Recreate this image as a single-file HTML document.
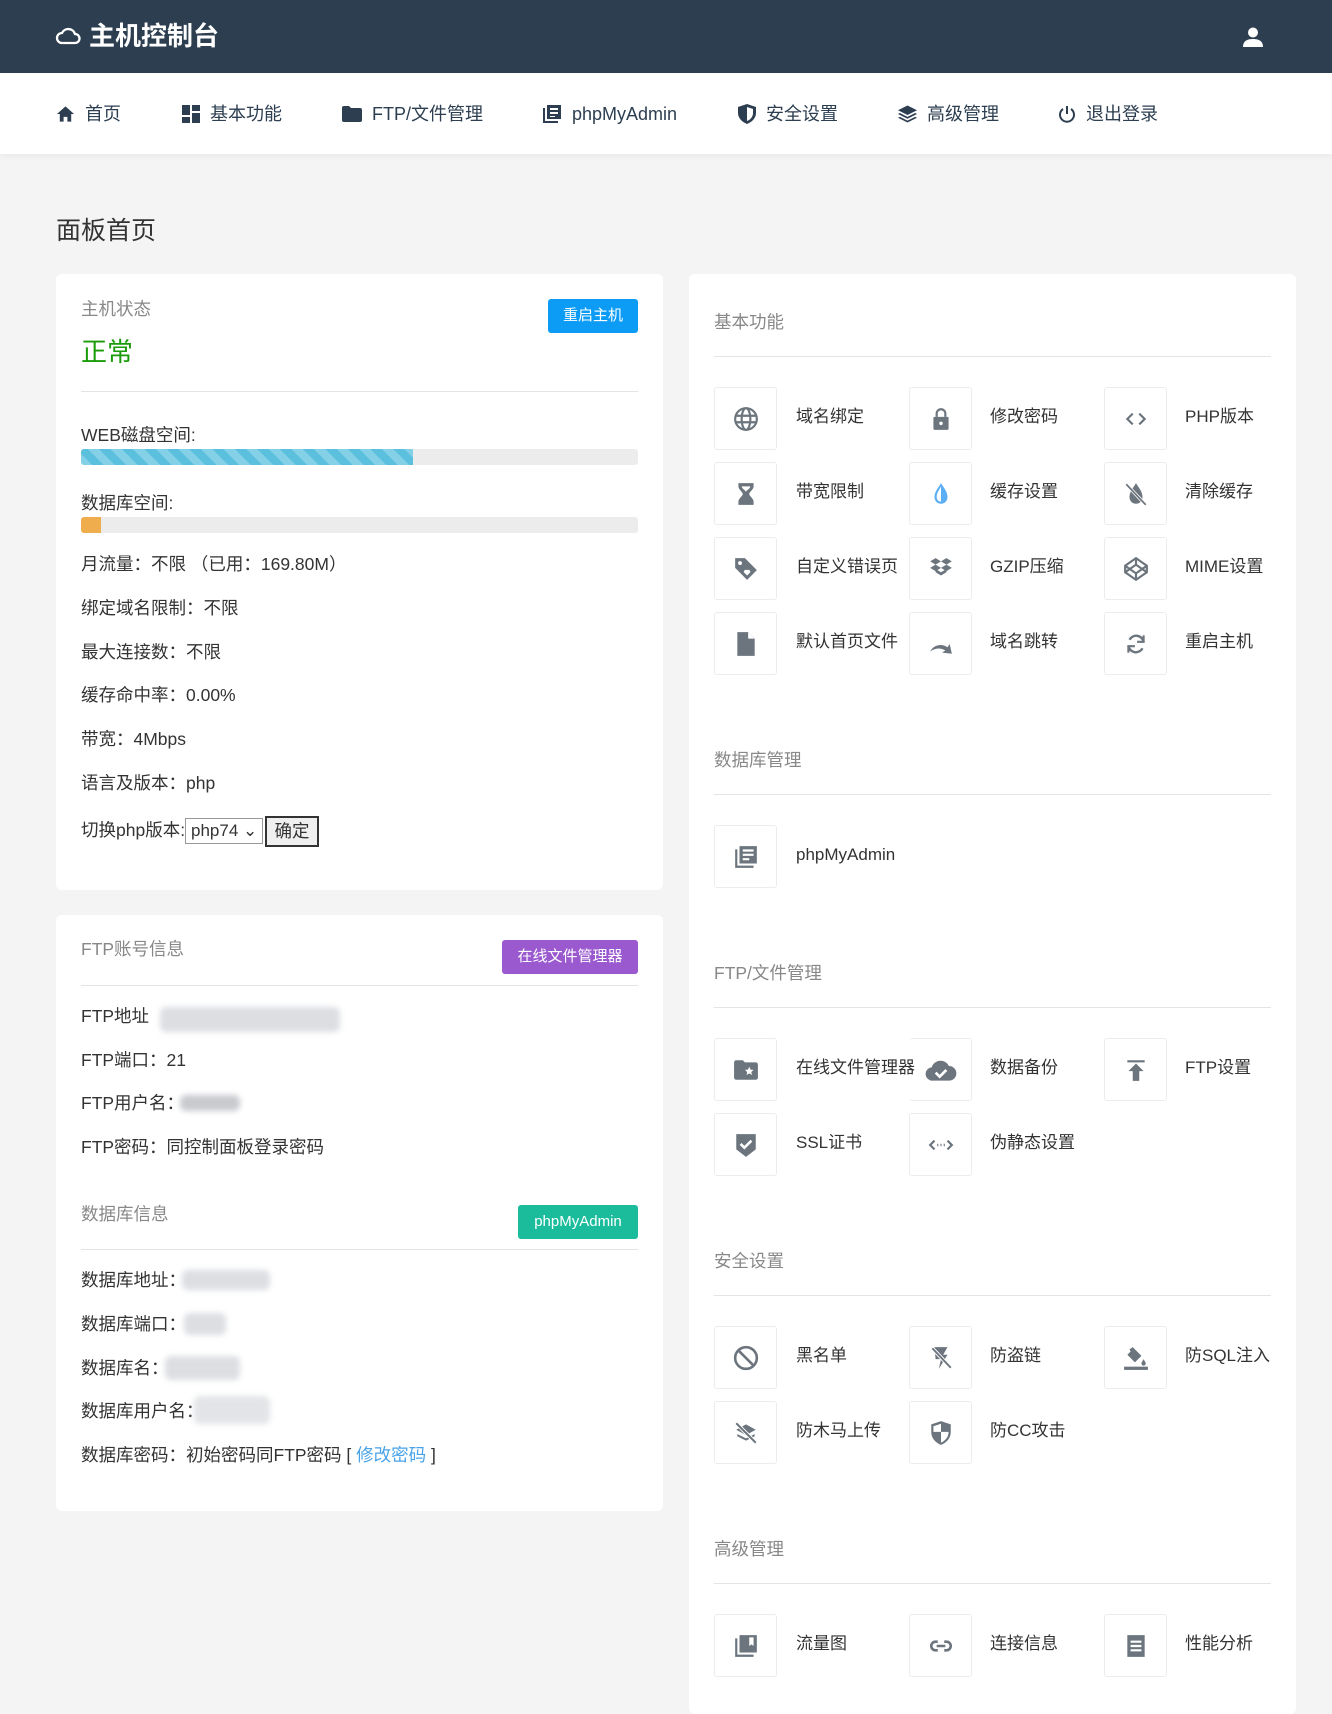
<!DOCTYPE html>
<html><head><meta charset="utf-8">
<style>
*{margin:0;padding:0;box-sizing:border-box}
body{width:1332px;height:1684px;background:#f4f4f4;font-family:"Liberation Sans","Noto Sans CJK SC",sans-serif;color:#333;position:relative;overflow:hidden}
.a{position:absolute}
.hdr{left:0;top:0;width:1332px;height:73px;background:#2c3e50}
.nav{left:0;top:73px;width:1332px;height:81px;background:#fff;box-shadow:0 2px 6px rgba(0,0,0,.05)}
.ni{top:101px;font-size:18px;color:#2c3e50;line-height:26px;display:flex;align-items:center;gap:10px}
.card{background:#fff;border-radius:6px}
.t{font-size:17.5px;line-height:24px;white-space:nowrap}
.g{color:#888}
.hr{height:1px;background:#e4e4e4}
.btn{color:#fff;font-size:15px;border-radius:3px;text-align:center;line-height:34px}
.tile{width:63px;height:63px;border:1px solid #ececec;border-radius:3px;display:flex;align-items:center;justify-content:center}
.tile svg{width:26px;height:26px}
.tile svg:not([fill]){fill:#6c757d}
.lb{font-size:17px;color:#333;white-space:nowrap;line-height:24px}
.blur{background:#dcdee2;filter:blur(3px);border-radius:6px}
</style></head><body>
<div class="a hdr"></div>
<svg class="a" style="left:55px;top:24px" width="26" height="22" viewBox="0 0 26 22"><path d="M7 19h13a4.5 4.5 0 0 0 0-9 7 7 0 0 0-13-1A5 5 0 0 0 7 19z" fill="none" stroke="#fff" stroke-width="2.3"/></svg>
<div class="a" style="left:89px;top:18px;font-size:26px;font-weight:bold;color:#fff;line-height:36px">主机控制台</div>
<svg class="a" style="left:1242px;top:26px" width="22" height="22" viewBox="0 0 22 22"><circle cx="11" cy="6.5" r="5" fill="#fff"/><path d="M1 21c0-6 4-8 10-8s10 2 10 8z" fill="#fff"/></svg>
<div class="a nav"></div>
<div class="a ni" style="left:56px"><svg width="19" height="18" viewBox="0 0 20 18"><path d="M10 1L1 9h3v8h4v-5h4v5h4V9h3z" fill="#2c3e50"/></svg>首页</div>
<div class="a ni" style="left:182px"><svg width="18" height="18" viewBox="0 0 18 18" fill="#2c3e50"><rect x="0" y="0" width="8" height="10"/><rect x="10" y="0" width="8" height="6"/><rect x="0" y="12" width="8" height="6"/><rect x="10" y="8" width="8" height="10"/></svg>基本功能</div>
<div class="a ni" style="left:342px"><svg width="20" height="16" viewBox="0 0 20 16"><path d="M0 2a2 2 0 0 1 2-2h5l2 2h9a2 2 0 0 1 2 2v10a2 2 0 0 1-2 2H2a2 2 0 0 1-2-2z" fill="#2c3e50"/></svg>FTP/文件管理</div>
<div class="a ni" style="left:542px"><svg width="20" height="20" viewBox="0 0 20 20" fill="#2c3e50"><path d="M1 4h2v13h13v2H1z"/><path d="M5 1h14v14H5zM8 4v2h8V4zm0 4v2h8V8zm0 4v1h5v-1z" fill-rule="evenodd"/></svg>phpMyAdmin</div>
<div class="a ni" style="left:738px"><svg width="18" height="20" viewBox="0 0 18 20"><path d="M9 0l9 3v6c0 5-4 9-9 11C4 18 0 14 0 9V3z" fill="#2c3e50"/><path d="M9 3l6 2v4c0 4-3 7-6 8z" fill="#fff"/></svg>安全设置</div>
<div class="a ni" style="left:898px"><svg width="19" height="18" viewBox="0 0 20 18" fill="#2c3e50"><path d="M10 0l10 5-10 5L0 5z"/><path d="M2 8l8 4 8-4 2 1-10 5L0 9z"/><path d="M2 12l8 4 8-4 2 1-10 5L0 13z"/></svg>高级管理</div>
<div class="a ni" style="left:1058px"><svg width="18" height="18" viewBox="0 0 18 18" fill="none" stroke="#2c3e50" stroke-width="2"><path d="M5 4a7 7 0 1 0 8 0"/><path d="M9 1v8"/></svg>退出登录</div>
<div class="a" style="left:56px;top:214px;font-size:25px;line-height:34px;color:#333">面板首页</div>

<!-- card 1 -->
<div class="a card" style="left:56px;top:274px;width:607px;height:616px"></div>
<div class="a t g" style="left:81px;top:297px">主机状态</div>
<div class="a btn" style="left:548px;top:299px;width:90px;background:#0c9cf5">重启主机</div>
<div class="a" style="left:81px;top:334px;font-size:26px;color:#1a9c0a;line-height:36px">正常</div>
<div class="a hr" style="left:81px;top:391px;width:557px"></div>
<div class="a t" style="left:81px;top:423px">WEB磁盘空间:</div>
<div class="a" style="left:81px;top:449px;width:557px;height:16px;background:#ececec;border-radius:3px"></div>
<div class="a" style="left:81px;top:449px;width:332px;height:16px;background:#5bc0de repeating-linear-gradient(45deg,rgba(255,255,255,.25) 0 8px,transparent 8px 16px);border-radius:3px 0 0 3px"></div>
<div class="a t" style="left:81px;top:491px">数据库空间:</div>
<div class="a" style="left:81px;top:517px;width:557px;height:16px;background:#ececec;border-radius:3px"></div>
<div class="a" style="left:81px;top:517px;width:20px;height:16px;background:#f0ad4e;border-radius:3px 0 0 3px"></div>
<div class="a t" style="left:81px;top:552px">月流量：不限 （已用：169.80M）</div>
<div class="a t" style="left:81px;top:596px">绑定域名限制：不限</div>
<div class="a t" style="left:81px;top:640px">最大连接数：不限</div>
<div class="a t" style="left:81px;top:683px">缓存命中率：0.00%</div>
<div class="a t" style="left:81px;top:727px">带宽：4Mbps</div>
<div class="a t" style="left:81px;top:771px">语言及版本：php</div>
<div class="a t" style="left:81px;top:818px">切换php版本:</div>
<div class="a t" style="left:185px;top:818px;width:78px;height:26px;border:1px solid #999;font-size:17px;line-height:24px;padding-left:5px">php74 ⌄</div>
<div class="a t" style="left:265px;top:816px;width:54px;height:31px;border:2px solid #333;background:#efefef;text-align:center;line-height:27px">确定</div>

<!-- card 2 -->
<div class="a card" style="left:56px;top:915px;width:607px;height:596px"></div>
<div class="a t g" style="left:81px;top:937px">FTP账号信息</div>
<div class="a btn" style="left:502px;top:940px;width:136px;background:#9b59d0">在线文件管理器</div>
<div class="a hr" style="left:81px;top:985px;width:557px"></div>
<div class="a t" style="left:81px;top:1004px">FTP地址</div>
<div class="a blur" style="left:160px;top:1007px;width:180px;height:25px"></div>
<div class="a t" style="left:81px;top:1048px">FTP端口：21</div>
<div class="a t" style="left:81px;top:1091px">FTP用户名：</div>
<div class="a blur" style="left:180px;top:1095px;width:60px;height:16px;background:#c8cace"></div>
<div class="a t" style="left:81px;top:1135px">FTP密码：同控制面板登录密码</div>
<div class="a t g" style="left:81px;top:1202px">数据库信息</div>
<div class="a btn" style="left:518px;top:1205px;width:120px;background:#1abc9c">phpMyAdmin</div>
<div class="a hr" style="left:81px;top:1249px;width:557px"></div>
<div class="a t" style="left:81px;top:1268px">数据库地址：</div>
<div class="a blur" style="left:182px;top:1270px;width:88px;height:20px"></div>
<div class="a t" style="left:81px;top:1312px">数据库端口：</div>
<div class="a blur" style="left:184px;top:1313px;width:42px;height:22px"></div>
<div class="a t" style="left:81px;top:1356px">数据库名：</div>
<div class="a blur" style="left:165px;top:1356px;width:75px;height:24px"></div>
<div class="a t" style="left:81px;top:1399px">数据库用户名：</div>
<div class="a blur" style="left:194px;top:1396px;width:76px;height:28px;background:#e2e4e7"></div>
<div class="a t" style="left:81px;top:1443px">数据库密码：初始密码同FTP密码 [ <span style="color:#4aa3e8">修改密码</span> ]</div>

<!-- right card -->
<div class="a card" style="left:689px;top:274px;width:607px;height:1440px"></div>
<div class="a t g" style="left:714px;top:310px">基本功能</div>
<div class="a hr" style="left:714px;top:356px;width:557px"></div>
<div class="a t g" style="left:714px;top:748px">数据库管理</div>
<div class="a hr" style="left:714px;top:794px;width:557px"></div>
<div class="a t g" style="left:714px;top:961px">FTP/文件管理</div>
<div class="a hr" style="left:714px;top:1007px;width:557px"></div>
<div class="a t g" style="left:714px;top:1249px">安全设置</div>
<div class="a hr" style="left:714px;top:1295px;width:557px"></div>
<div class="a t g" style="left:714px;top:1537px">高级管理</div>
<div class="a hr" style="left:714px;top:1583px;width:557px"></div>

<!-- tiles row1 y387 -->
<div class="a tile" style="left:714px;top:387px"><svg viewBox="0 0 24 24" fill="none" stroke="#6c757d" stroke-width="2"><circle cx="12" cy="12" r="10"/><ellipse cx="12" cy="12" rx="4" ry="10"/><path d="M2 9h20M2 15h20"/></svg></div>
<div class="a lb" style="left:796px;top:405px">域名绑定</div>
<div class="a tile" style="left:909px;top:387px"><svg viewBox="0 0 24 24"><path d="M7 10V7a5 5 0 0 1 10 0v3h-2V7a3 3 0 0 0-6 0v3z"/><rect x="5" y="10" width="14" height="12" rx="1"/><circle cx="12" cy="16" r="1.6" fill="#fff"/></svg></div>
<div class="a lb" style="left:990px;top:405px">修改密码</div>
<div class="a tile" style="left:1104px;top:387px"><svg viewBox="0 0 24 24" fill="none" stroke="#6c757d" stroke-width="2"><path d="M9 7l-5 5 5 5M15 7l5 5-5 5"/></svg></div>
<div class="a lb" style="left:1185px;top:405px">PHP版本</div>
<!-- row2 -->
<div class="a tile" style="left:714px;top:462px"><svg viewBox="0 0 24 24"><path d="M5 2h14v3c0 3-4 5-4 7s4 4 4 7v3H5v-3c0-3 4-5 4-7S5 8 5 5z"/><path d="M8 5h8c0 2-4 4-4 5-0-1-4-3-4-5z" fill="#fff"/></svg></div>
<div class="a lb" style="left:796px;top:480px">带宽限制</div>
<div class="a tile" style="left:909px;top:462px"><svg viewBox="0 0 24 24" fill="#5aaef5"><path d="M12 2C9 7 6 10 6 15a6 6 0 0 0 12 0c0-5-3-8-6-13z"/><path d="M12 5C10 9 8 11 8 15a4 4 0 0 0 4 4z" fill="#fff"/></svg></div>
<div class="a lb" style="left:990px;top:480px">缓存设置</div>
<div class="a tile" style="left:1104px;top:462px"><svg viewBox="0 0 24 24"><path d="M12 2C9 7 6 10 6 15a6 6 0 0 0 12 0c0-5-3-8-6-13z"/><path d="M3 3l18 19" stroke="#fff" stroke-width="3"/><path d="M3 3l18 19" stroke="#6c757d" stroke-width="1.6"/></svg></div>
<div class="a lb" style="left:1185px;top:480px">清除缓存</div>
<!-- row3 -->
<div class="a tile" style="left:714px;top:537px"><svg viewBox="0 0 24 24"><path d="M2 2h9l11 11-9 9L2 11z"/><circle cx="6.5" cy="6.5" r="1.8" fill="#fff"/><path d="M13 18l-3-3a2 2 0 0 1 3-2 2 2 0 0 1 3 2z" fill="#fff"/></svg></div>
<div class="a lb" style="left:796px;top:555px">自定义错误页</div>
<div class="a tile" style="left:909px;top:537px"><svg viewBox="0 0 24 24"><path d="M7 2l5 3-5 3-5-3zM17 2l5 3-5 3-5-3zM7 8l5 3-5 3-5-3zM17 8l5 3-5 3-5-3zM12 15l5-3v3l-5 3-5-3v-3z"/></svg></div>
<div class="a lb" style="left:990px;top:555px">GZIP压缩</div>
<div class="a tile" style="left:1104px;top:537px"><svg viewBox="0 0 24 24" fill="none" stroke="#6c757d" stroke-width="2"><path d="M12 2l10 7v6l-10 7-10-7V9z"/><path d="M2 9l10 7 10-7M2 15l10-7 10 7M12 2v6M12 16v6"/></svg></div>
<div class="a lb" style="left:1185px;top:555px">MIME设置</div>
<!-- row4 -->
<div class="a tile" style="left:714px;top:612px"><svg viewBox="0 0 24 24"><path d="M4 1h10l6 6v16H4z"/><path d="M14 1v6h6" fill="#fff"/></svg></div>
<div class="a lb" style="left:796px;top:630px">默认首页文件</div>
<div class="a tile" style="left:909px;top:612px"><svg viewBox="0 0 24 24"><path d="M2 19c3-6 10-8 16-4l2-3 2 9-9-1 3-2c-5-3-10-2-14 1z"/></svg></div>
<div class="a lb" style="left:990px;top:630px">域名跳转</div>
<div class="a tile" style="left:1104px;top:612px"><svg viewBox="0 0 24 24" fill="none" stroke="#6c757d" stroke-width="2.2"><path d="M19 10a7 7 0 0 0-13-2M5 14a7 7 0 0 0 13 2"/><path d="M19 4v6h-6M5 20v-6h6" stroke-width="2"/></svg></div>
<div class="a lb" style="left:1185px;top:630px">重启主机</div>
<!-- db -->
<div class="a tile" style="left:714px;top:825px"><svg viewBox="0 0 24 24"><path d="M2 5h2v15h15v2H2z"/><path d="M6 2h16v16H6zM9 5v2h10V5zm0 4v2h10V9zm0 4v2h6v-2z" fill-rule="evenodd"/></svg></div>
<div class="a lb" style="left:796px;top:843px">phpMyAdmin</div>
<!-- ftp -->
<div class="a tile" style="left:714px;top:1038px"><svg viewBox="0 0 24 24"><path d="M1 5a2 2 0 0 1 2-2h6l2 2h10a2 2 0 0 1 2 2v12a2 2 0 0 1-2 2H3a2 2 0 0 1-2-2z"/><path d="M15 9l1.2 2.6 2.8.3-2.1 1.9.6 2.8-2.5-1.5-2.5 1.5.6-2.8-2.1-1.9 2.8-.3z" fill="#fff"/></svg></div>
<div class="a lb" style="left:796px;top:1056px">在线文件管理器</div>
<div class="a tile" style="left:909px;top:1038px;border-left-color:transparent"><svg viewBox="0 0 24 24" style="width:32px;height:32px"><path d="M6 20a5 5 0 0 1-1-10 7 7 0 0 1 13-1 5.5 5.5 0 0 1 0 11z"/><path d="M8 14l3 3 5-5" stroke="#fff" stroke-width="2" fill="none"/></svg></div>
<div class="a lb" style="left:990px;top:1056px">数据备份</div>
<div class="a tile" style="left:1104px;top:1038px"><svg viewBox="0 0 24 24"><path d="M4 3h16v2H4zM12 6l7 7h-4v9H9v-9H5z"/></svg></div>
<div class="a lb" style="left:1185px;top:1056px">FTP设置</div>
<div class="a tile" style="left:714px;top:1113px"><svg viewBox="0 0 24 24"><path d="M3 2h18v14l-9 7-9-7z"/><path d="M7 11l3.5 3.5L17 8" stroke="#fff" stroke-width="2.4" fill="none"/></svg></div>
<div class="a lb" style="left:796px;top:1131px">SSL证书</div>
<div class="a tile" style="left:909px;top:1113px"><svg viewBox="0 0 24 24" fill="none" stroke="#6c757d" stroke-width="2"><path d="M6 8l-4 4 4 4M18 8l4 4-4 4"/><path d="M8.5 12h1M11.5 12h1M14.5 12h1" stroke-width="2.2"/></svg></div>
<div class="a lb" style="left:990px;top:1131px">伪静态设置</div>
<!-- security -->
<div class="a tile" style="left:714px;top:1326px"><svg viewBox="0 0 24 24" fill="none" stroke="#6c757d" stroke-width="2.4"><circle cx="12" cy="12" r="10"/><path d="M5 5l14 14"/></svg></div>
<div class="a lb" style="left:796px;top:1344px">黑名单</div>
<div class="a tile" style="left:909px;top:1326px"><svg viewBox="0 0 24 24"><path d="M6 2h12l-4 7h4L10 22l2-9H7z"/><path d="M4 3l17 18" stroke="#fff" stroke-width="3.5"/><path d="M4 3l17 18" stroke="#6c757d" stroke-width="1.8"/></svg></div>
<div class="a lb" style="left:990px;top:1344px">防盗链</div>
<div class="a tile" style="left:1104px;top:1326px"><svg viewBox="0 0 24 24"><path d="M9 2l8 8-6 6-7-7 3-3-1-2z"/><path d="M19 13c1 2 2 3 2 4a2 2 0 0 1-4 0c0-1 1-2 2-4z"/><rect x="1" y="20" width="22" height="3"/></svg></div>
<div class="a lb" style="left:1185px;top:1344px">防SQL注入</div>
<div class="a tile" style="left:714px;top:1401px"><svg viewBox="0 0 24 24"><path d="M12 4l9 5-9 5-9-5z"/><path d="M4 13l8 4 8-4v2l-8 4-8-4z"/><path d="M3 3l18 18" stroke="#fff" stroke-width="3.5"/><path d="M3 3l18 18" stroke="#6c757d" stroke-width="1.8"/></svg></div>
<div class="a lb" style="left:796px;top:1419px">防木马上传</div>
<div class="a tile" style="left:909px;top:1401px"><svg viewBox="0 0 24 24"><path d="M12 1l9 3v7c0 6-4 10-9 12C7 21 3 17 3 11V4z"/><path d="M12 3.5l-7 2.3V11h7zM12 11h7c0 5-3 8-7 10z" fill="#fff"/></svg></div>
<div class="a lb" style="left:990px;top:1419px">防CC攻击</div>
<!-- advanced -->
<div class="a tile" style="left:714px;top:1614px"><svg viewBox="0 0 24 24"><path d="M2 5h2v15h15v2H2z"/><path d="M6 2h16v16H6z"/><path d="M15 4h4v8l-2-1.5-2 1.5z" fill="#fff"/></svg></div>
<div class="a lb" style="left:796px;top:1632px">流量图</div>
<div class="a tile" style="left:909px;top:1614px"><svg viewBox="0 0 24 24" fill="none" stroke="#6c757d" stroke-width="2.4"><path d="M9 8H7a4 4 0 0 0 0 8h2M15 8h2a4 4 0 0 1 0 8h-2M8 12h8"/></svg></div>
<div class="a lb" style="left:990px;top:1632px">连接信息</div>
<div class="a tile" style="left:1104px;top:1614px"><svg viewBox="0 0 24 24"><path d="M4 2h16v20H4z"/><path d="M7 7h10v2H7zM7 11h10v2H7zM7 15h10v2H7z" fill="#fff"/></svg></div>
<div class="a lb" style="left:1185px;top:1632px">性能分析</div>
</body></html>
